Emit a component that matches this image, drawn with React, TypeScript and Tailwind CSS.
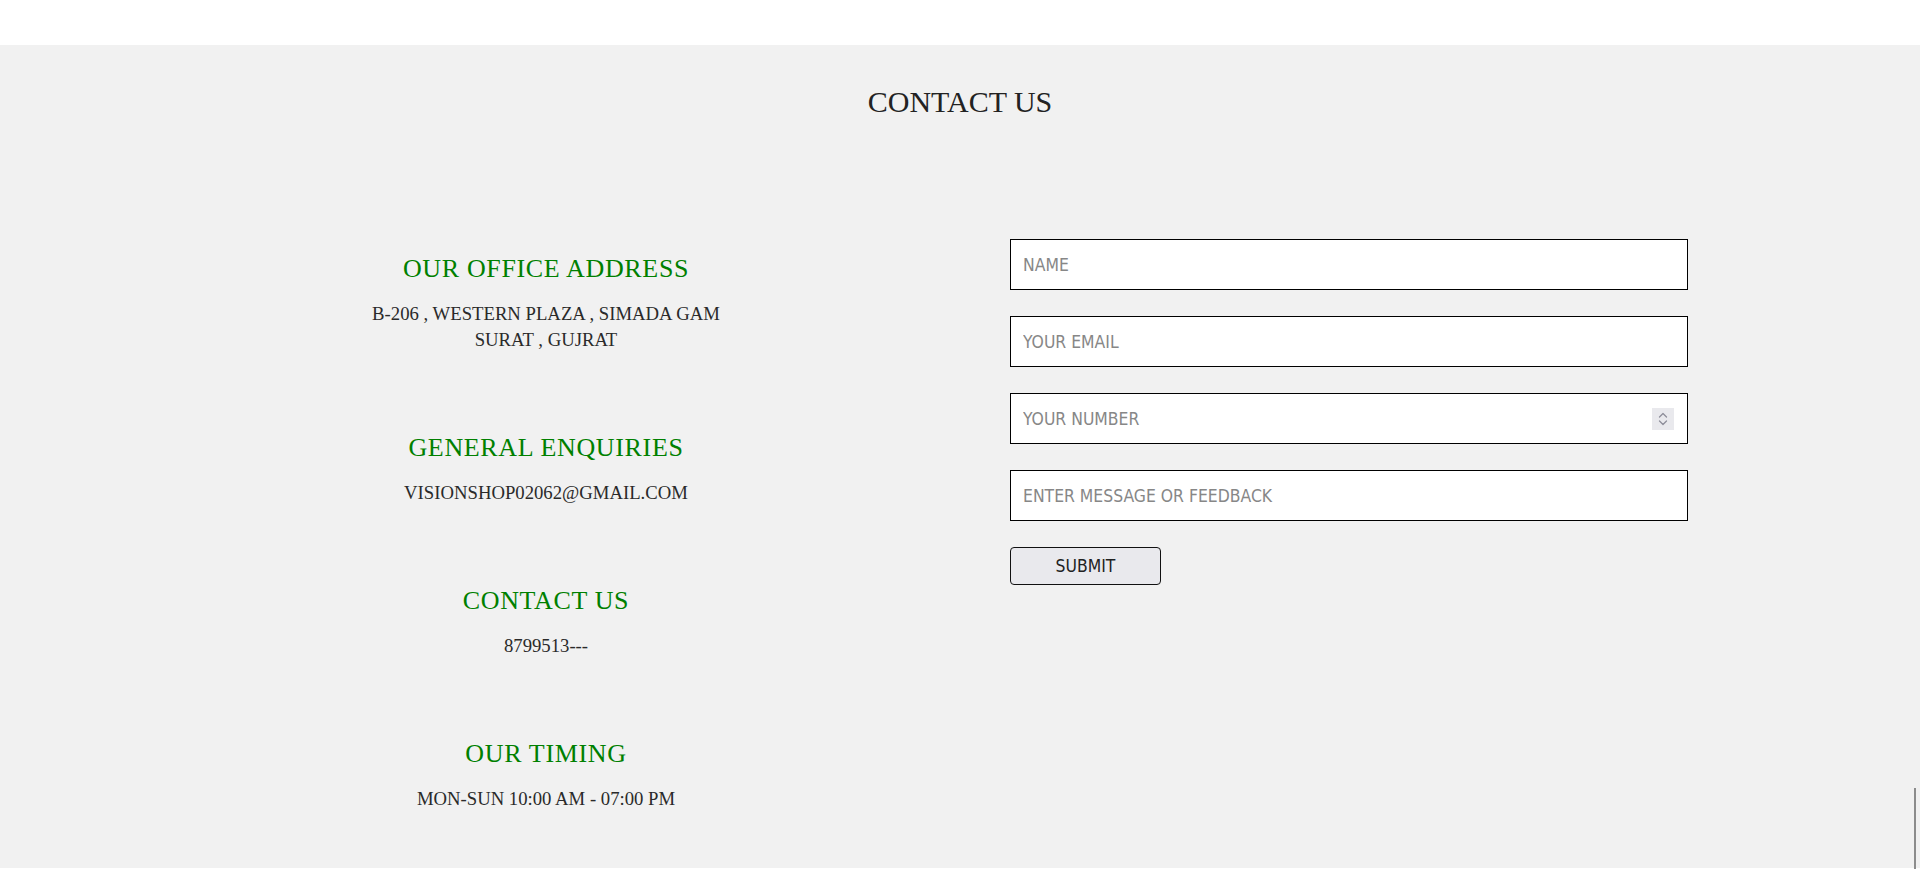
import React from "react";

const serif = "font-['Liberation_Serif','Times_New_Roman',serif]";
const formFont =
  "font-['DejaVu_Sans_Condensed','DejaVu_Sans',sans-serif] font-stretch-condensed";

function InfoBlock({ title, lines }: { title: string; lines: string[] }) {
  return (
    <div className="flex flex-col items-center text-center">
      <h2 className="text-[26px] leading-[30px] tracking-[0.65px] text-[#008000] font-normal mb-[17px]">
        {title}
      </h2>
      <div className="text-[18.72px] leading-[26px] text-[#2a2a2a]">
        {lines.map((l) => (
          <div key={l}>{l}</div>
        ))}
      </div>
    </div>
  );
}

function Spinner() {
  return (
    <div className="w-[22px] h-[22px] bg-[#e9e9ed] flex items-center justify-center shrink-0">
      <svg width="22" height="22" viewBox="0 0 22 22" fill="none">
        <path d="M7.5 9 L11 5.5 L14.5 9" stroke="#8e8e9a" strokeWidth="1.3" strokeLinecap="round" strokeLinejoin="round" />
        <path d="M7.5 13 L11 16.5 L14.5 13" stroke="#8e8e9a" strokeWidth="1.3" strokeLinecap="round" strokeLinejoin="round" />
      </svg>
    </div>
  );
}

export default function App() {
  const inputCls =
    "w-full h-[51px] border border-black bg-white px-3 text-[17.4px] text-[#222] outline-none placeholder:text-[#878787] " +
    formFont;
  return (
    <div className="w-[1920px] min-h-[878px] bg-white">
      <div className="h-[45px] bg-white" />
      <section className={"relative h-[823px] bg-[#f1f1f1] " + serif}>
        <h1 className="pt-[40px] text-center text-[30px] leading-[34px] text-[#222] font-normal">
          CONTACT US
        </h1>
        <div className="mt-[120px] flex pl-[246px]">
          <div className="w-[600px] pt-[15px] flex flex-col gap-[80px]">
            <InfoBlock
              title="OUR OFFICE ADDRESS"
              lines={["B-206 , WESTERN PLAZA , SIMADA GAM", "SURAT , GUJRAT"]}
            />
            <InfoBlock title="GENERAL ENQUIRIES" lines={["VISIONSHOP02062@GMAIL.COM"]} />
            <InfoBlock title="CONTACT US" lines={["8799513---"]} />
            <InfoBlock title="OUR TIMING" lines={["MON-SUN 10:00 AM - 07:00 PM"]} />
          </div>
          <form
            className="ml-[164px] w-[678px] flex flex-col gap-[26px]"
            onSubmit={(e) => e.preventDefault()}
          >
            <input className={inputCls} placeholder="NAME" />
            <input className={inputCls} placeholder="YOUR EMAIL" />
            <div className="w-full h-[51px] border border-black bg-white flex items-center pr-[13px]">
              <input
                className={
                  "flex-1 h-full bg-transparent px-3 text-[17.4px] text-[#222] outline-none placeholder:text-[#878787] " +
                  formFont
                }
                placeholder="YOUR NUMBER"
              />
              <Spinner />
            </div>
            <input className={inputCls} placeholder="ENTER MESSAGE OR FEEDBACK" />
            <button
              type="submit"
              className={
                "self-start w-[151px] h-[38px] rounded-[4px] border border-[#111] bg-[#e9e9ed] text-[17.4px] text-[#222] " +
                formFont
              }
            >
              SUBMIT
            </button>
          </form>
        </div>
        <div className="absolute right-[4px] top-[743px] w-[2px] h-[81px] bg-[#8c8c8c]" />
      </section>
      <div className="h-[10px] bg-white" />
    </div>
  );
}
